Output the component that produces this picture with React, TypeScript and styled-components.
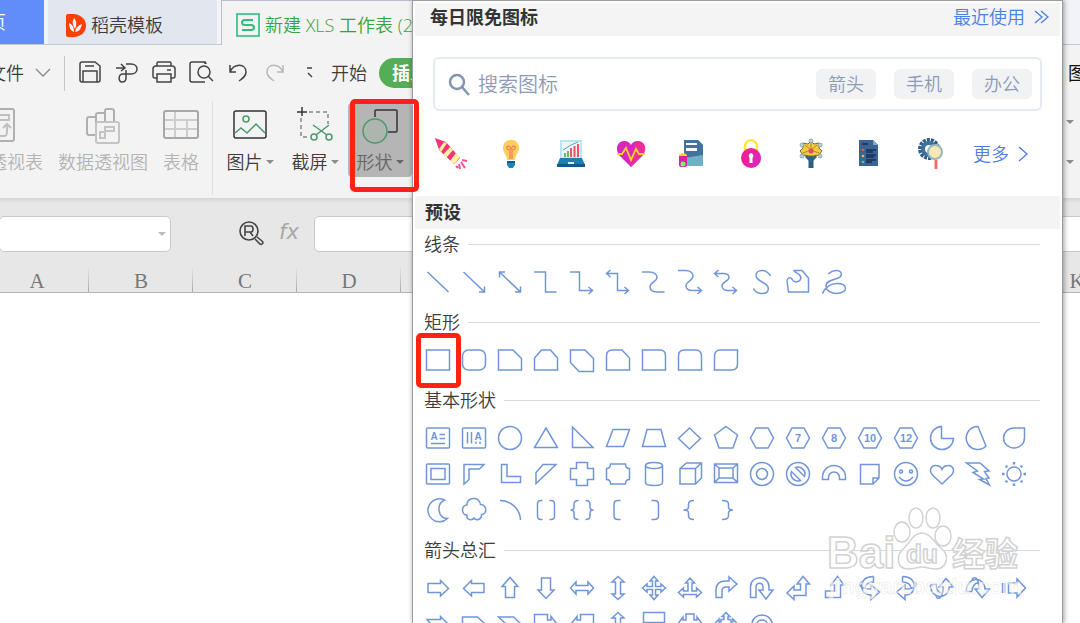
import React from "react";
import styled, { createGlobalStyle, css } from "styled-components";

const GlobalStyle = createGlobalStyle`
  * { box-sizing: border-box; }
  html, body { margin: 0; padding: 0; }
  body {
    font-family: "Open Sans", "Noto Sans CJK SC", sans-serif;
    font-size: 18px;
    line-height: 24px;
    font-weight: 350;
    color: #3c3c3c;
    background: #fff;
  }
  button, input { font: inherit; color: inherit; }
  button { border: 0; padding: 0; background: none; white-space: nowrap; cursor: pointer; }
  svg { display: block; flex: none; overflow: visible; }
`;

const BLUE = "#7096d9";

/* ---------- workbook window ---------- */

const Page = styled.div`
  position: relative;
  min-height: 100vh;
  overflow: hidden;
  display: flex;
  flex-direction: column;
`;

const TabBar = styled.nav`
  display: flex;
  height: 45px;
  background: #f1f3f8;
  box-shadow: inset 0 -1px #c3c8d7;
`;

const HomeTab = styled.button`
  width: 44px;
  height: 44px;
  margin-right: 4px;
  padding-right: 38px;
  display: flex;
  justify-content: flex-end;
  align-items: center;
  overflow: hidden;
  background: #608dfa;
  color: #fff;
`;

const Tab = styled.button<{ $active?: boolean }>`
  display: flex;
  align-items: center;
  height: 44px;
  padding: 6px 0 0 18px;
  gap: 5px;
  width: 169px;
  margin-right: 4px;
  background: #e2e6ef;
  ${(p) =>
    p.$active &&
    css`
      height: 45px;
      width: 320px;
      padding: 4px 0 0 14px;
      background: #f3f3f3;
      border-left: 1px solid #b9bed0;
      border-top: 1px solid #b9bed0;
      color: #36a33c;
    `}
`;

const MenuRow = styled.div`
  display: flex;
  align-items: center;
  height: 56px;
  background: #f3f3f3;
`;

const FileButton = styled.button`
  width: 64px;
  padding-right: 14px;
  display: flex;
  align-items: center;
  justify-content: flex-end;
  gap: 12px;
`;

const Divider = styled.span<{ $height: number; $color: string }>`
  flex: none;
  width: 1px;
  height: ${(p) => p.$height}px;
  background: ${(p) => p.$color};
`;

const QuickTools = styled.div`
  display: flex;
  margin: 0 1px 0 6px;
`;

const QuickButton = styled.button`
  width: 37px;
  height: 32px;
  padding-bottom: 2px;
  display: grid;
  place-items: center;
`;

const RibbonTab = styled.button<{ $active?: boolean }>`
  height: 30px;
  ${(p) =>
    p.$active &&
    css`
      margin-left: 12px;
      padding: 0 13px;
      border-radius: 15px;
      background: #55ae55;
      color: #fff;
      font-weight: 700;
    `}
`;

const EdgeTab = styled.button`
  margin-left: auto;
  width: 12px;
  overflow: hidden;
  text-align: left;
  color: #111;
  font-weight: 400;
`;

const Ribbon = styled.div`
  display: flex;
  height: 97px;
  background: #f3f3f3;
`;

const PivotGroup = styled.div`
  display: flex;
  gap: 14px;
  margin: 2px 12px 0 -48px;
  color: #b4b4b4;
`;

const InsertGroup = styled.div`
  display: flex;
  gap: 1px;
  margin: 2px 0 0 5px;
`;

const Tool = styled.button<{ $width: number; $pressed?: boolean }>`
  flex: none;
  width: ${(p) => p.$width}px;
  height: 74px;
  display: flex;
  flex-direction: column;
  align-items: center;
  justify-content: center;
  gap: 7px;
  border-radius: 4px;
  background: ${(p) => (p.$pressed ? "#b5b5b5" : "transparent")};
  color: ${(p) => (p.$pressed ? "#666" : "inherit")};
`;

const ToolLabel = styled.span`
  display: flex;
  align-items: center;
  justify-content: center;
  gap: 3px;
`;

const Caret = styled.span<{ $color?: string }>`
  border: 4px solid transparent;
  border-bottom: 0;
  border-top-color: ${(p) => p.$color ?? "#8c8c8c"};
`;

const EdgeCarets = styled.div`
  margin-left: auto;
  width: 14px;
  padding-top: 19px;
  display: flex;
  flex-direction: column;
  align-items: flex-start;
  gap: 36px;
`;

const FormulaRow = styled.div`
  display: flex;
  align-items: center;
  height: 68px;
  padding-top: 3px;
  background: linear-gradient(#d4d4d4, #e7e7e7 5px);
`;

const NameBox = styled.label`
  flex: none;
  display: flex;
  align-items: center;
  width: 172px;
  height: 36px;
  margin-left: -1px;
  padding-right: 4px;
  border: 1px solid #c8c8c8;
  border-radius: 5px;
  background: #fff;
`;

const PlainInput = styled.input`
  flex: 1;
  min-width: 0;
  border: 0;
  outline: 0;
  padding: 0;
  background: transparent;
`;

const FormulaTools = styled.div`
  display: flex;
  align-items: center;
  gap: 15px;
  width: 143px;
  padding-left: 68px;
`;

const Fx = styled.button`
  padding-bottom: 4px;
  font-family: "DejaVu Sans", sans-serif;
  font-size: 21px;
  font-style: italic;
  color: #a8a8a8;
`;

const FormulaInput = styled.input`
  flex: 1;
  min-width: 0;
  height: 36px;
  margin-right: -8px;
  border: 1px solid #c8c8c8;
  border-radius: 5px;
  background: #fff;
`;

const Sheet = styled.table`
  width: 1144px;
  margin-left: -15px;
  table-layout: fixed;
  border-collapse: separate;
  border-spacing: 0;
`;

const ColumnHead = styled.th`
  height: 27px;
  padding: 3px 0 0;
  border-bottom: 1px solid #b4b4b4;
  background: linear-gradient(#e7e7e7, #aaa) right / 1px 100% no-repeat #e7e7e7;
  font: 400 21px/22px "Liberation Serif", serif;
  color: #777;
`;

/* ---------- shape gallery ---------- */

const Panel = styled.section`
  position: absolute;
  top: 0;
  bottom: 0;
  left: 412px;
  right: 17px;
  padding: 2px;
  overflow: hidden;
  background: #fff;
  border: 1px solid #9c9ca0;
  border-bottom: 0;
`;

const PanelShadow = styled.div`
  position: absolute;
  top: 0;
  bottom: 0;
  left: 412px;
  right: 17px;
  box-shadow: 1px 0 5px rgba(0, 0, 0, 0.4);
`;

const Bar = styled.header<{ $indent: number }>`
  display: flex;
  align-items: center;
  justify-content: space-between;
  height: 33px;
  padding: 0 11px 6px ${(p) => p.$indent}px;
  background: #f4f4f4;
`;

const PresetBar = styled(Bar)`
  padding-bottom: 1px;
`;

const BarTitle = styled.h2`
  margin: 0;
  font-size: 18px;
  line-height: 24px;
  font-weight: 700;
  color: #333;
`;

const BlueLink = styled.a`
  display: flex;
  align-items: center;
  gap: 9px;
  color: #4a7fe8;
  text-decoration: none;
`;

const SearchBox = styled.div`
  display: flex;
  align-items: center;
  height: 54px;
  margin: 21px 18px 0;
  padding: 0 8px 0 13px;
  border: 2px solid #e5e9f0;
  border-radius: 6px;
  color: #8e9ab4;
`;

const SearchLabel = styled.label`
  flex: 1;
  display: flex;
  align-items: center;
  gap: 8px;
  padding-top: 2px;
`;

const SearchInput = styled(PlainInput)`
  font-size: 20px;
  &::placeholder {
    color: #8e9ab4;
    opacity: 1;
  }
`;

const Pills = styled.div`
  display: flex;
  gap: 18px;
`;

const Pill = styled.button`
  width: 60px;
  height: 30px;
  border-radius: 6px;
  background: #f1f2f4;
`;

const DailyRow = styled.div`
  display: flex;
  align-items: center;
  height: 85px;
  padding-left: 6px;
`;

const DailyButton = styled.button`
  width: 60px;
  height: 40px;
  display: grid;
  place-items: center;
`;

const MoreLink = styled(BlueLink)`
  margin-left: 12px;
`;

const Groups = styled.div`
  padding: 1px 20px 0 5px;
`;

const Group = styled.section`
  padding-bottom: 8px;
`;

const GroupTitle = styled.h3`
  display: flex;
  align-items: center;
  gap: 8px;
  height: 28px;
  margin: 0 0 6px 4px;
  font-size: 18px;
  font-weight: 350;
  &::after {
    content: "";
    flex: 1;
    height: 1px;
    background: #dadada;
  }
`;

const ShapeGrid = styled.div`
  display: grid;
  grid-template-columns: repeat(17, 36px);
`;

const ShapeButton = styled.button`
  position: relative;
  width: 36px;
  height: 36px;
`;

const mark = css`
  position: absolute;
  border: 5px solid #ff2214;
  border-radius: 5px;
  pointer-events: none;
`;

const ButtonMark = styled.div`
  ${mark}
  left: 350px;
  top: 99px;
  width: 69px;
  height: 93px;
`;

const ShapeMark = styled.span`
  ${mark}
  inset: -9px -5px -10px -4px;
`;

const Watermark = styled.svg`
  position: absolute;
  left: 826px;
  top: 499px;
  pointer-events: none;
`;

/* ---------- shape drawings, centred on the origin ---------- */

type Shape = { name: string; d?: string; extra?: React.ReactNode };

const hex = "M-6-10H6L11.5 0L6 10H-6L-11.5 0Z";
const glyph = (text: string, x = 0, y = 4, size = 11) => (
  <text
    x={x}
    y={y}
    textAnchor="middle"
    fontFamily="Liberation Sans, sans-serif"
    fontSize={size}
    fontWeight={700}
    fill={BLUE}
    stroke="none"
  >
    {text}
  </text>
);
const ring = (r: number) => <circle r={r} />;

const lines: Shape[] = [
  { name: "直线", d: "M-10.5-10L10.5 10" },
  { name: "箭头", d: "M-10.5-10L10.5 10M10.5 4.5V10H5" },
  { name: "双箭头", d: "M-10.5-10L10.5 10M10.5 4.5V10H5M-10.5-4.5V-10H-5" },
  { name: "肘形连接符", d: "M-12-10H-.5V10H10.5" },
  { name: "肘形箭头", d: "M-12-10H-2.5V8.5H10.5M6.5 5L10.5 8.5L6.5 12" },
  { name: "肘形双箭头", d: "M-11-8.5H-.5V8.5H10.5M6.5 5L10.5 8.5L6.5 12M-7.5-12L-11.5-8.5L-7.5-5" },
  { name: "曲线连接符", d: "M-12-10H-5C1-10 3-7 3-4.5C3 0-4 0-4 5C-4 8-1 10 4 10H10.5" },
  { name: "曲线箭头", d: "M-12-11.5H-5C1-11.5 3-8.5 3-6C3-1-4-1-4 4C-4 7-1 8.5 3 8.5H11.5M7.5 5L11.5 8.5L7.5 12" },
  { name: "曲线双箭头", d: "M-11-8.5H-3C1-8.5 3-7 3-4.5C3-.5-4-.5-4 4C-4 7-1 8.5 2 8.5H10.5M6.5 5L10.5 8.5L6.5 12M-7.5-12L-11.5-8.5L-7.5-5" },
  { name: "曲线", d: "M8.7-6.3C6-10 3-11.6 0-11.6C-4-11.6-6-9-6-6.5C-6 0 6.3 0 6.3 6.5C6.3 9.5 4 11.6 0 11.6C-4 11.6-7 9.5-8.7 6.7" },
  { name: "任意多边形", d: "M-4-11.5H4L10.5-4V10H-9.5L-11-1C-11-4-8.5-5-6.5-3.5C-5-2-5 0-2 0C2 0 4-3.5 2-6.5C.5-9-3-9-4-11.5Z" },
  { name: "自由曲线", d: "M-5.7-8C-3-11 0-11.6 3-11.6C7-11.6 8.5-8 6.5-5.5C4-2-8-3-8 4C-8 8-4 11.4 2 11.4C8 11.4 11.5 9 11.5 6.5C11.5 4 9 1.5 3 1.5C-4 1.5-9 6-11.6 11.6" },
];

const rects: Shape[] = [
  { name: "矩形", d: "M-11.5-10H11.5V10H-11.5Z" },
  { name: "圆角矩形", extra: <rect x={-11.5} y={-10} width={23} height={20} rx={6} /> },
  { name: "剪去单角", d: "M-11.5-10H3L11.5-1.5V10H-11.5Z" },
  { name: "剪去同侧角", d: "M-11.5-2L-4.5-10H4.5L11.5-2V10H-11.5Z" },
  { name: "剪去对角", d: "M-11.5-10H3L11.5-1.5V11.5H-3L-11.5 2.5Z" },
  { name: "剪去圆角", d: "M-11.5 10V-4Q-11.5-10-5.5-10H4L11.5-2V10Z" },
  { name: "单圆角", d: "M-11.5-10H6Q11.5-10 11.5-4V10H-11.5Z" },
  { name: "同侧圆角", d: "M-11.5 10V-4Q-11.5-10-5.5-10H5.5Q11.5-10 11.5-4V10Z" },
  { name: "对角圆角", d: "M11.5-10V4Q11.5 10 5.5 10H-11.5V-4Q-11.5-10-5.5-10Z" },
];

const basics: Shape[] = [
  { name: "文本框", d: "M1.5-3.5H7M1.5 .5H7M-7 5.5H7", extra: <><rect x={-11.5} y={-10} width={23} height={20} rx={1} />{glyph("A", -4, 2, 10)}</> },
  { name: "竖向文本框", d: "M-6.5-6V5.5M-2.5-6V5.5M2 3.5V6M6 3.5V6", extra: <><rect x={-11.5} y={-10} width={23} height={20} rx={1} />{glyph("A", 4, 2, 10)}</> },
  { name: "椭圆", extra: ring(11.5) },
  { name: "等腰三角形", d: "M0-10L11.5 9.5H-11.5Z" },
  { name: "直角三角形", d: "M-9.5-11L11 9.5H-9.5Z" },
  { name: "平行四边形", d: "M-5-8.5H11.5L5.5 8.5H-11.5Z" },
  { name: "梯形", d: "M-7-8.5H7L11.5 8.5H-11.5Z" },
  { name: "菱形", d: "M-.5-10L10.5 .5L-.5 11L-11.5 .5Z" },
  { name: "五边形", d: "M0-11.5L11.5-3L7 10H-7L-11.5-3Z" },
  { name: "六边形", d: hex },
  { name: "七边形", d: hex, extra: glyph("7") },
  { name: "八边形", d: hex, extra: glyph("8") },
  { name: "十边形", d: hex, extra: glyph("10") },
  { name: "十二边形", d: hex, extra: glyph("12") },
  { name: "饼形", d: "M-.5-11.5A11.5 11.5 0 1 0 11.5 .5H-.5Z" },
  { name: "弦形", d: "M0-11.5L8 8A11.5 11.5 0 1 1 0-11.5Z" },
  { name: "泪滴形", d: "M10.5-10V0A10.5 10 0 1 1 0-10Z" },
  { name: "图文框", extra: <><rect x={-11.5} y={-10} width={23} height={20} rx={1} /><rect x={-7} y={-5.5} width={14} height={11} /></> },
  { name: "半闭框", d: "M-10-9.5H10L5.5-5H-5V5.5L-10 10Z" },
  { name: "L形", d: "M-8.5-9.5H-3V2.5H10.5V8.5H-8.5Z" },
  { name: "斜纹", d: "M-10-1.5L-3-9.5H10L-10 9.5Z" },
  { name: "十字形", d: "M-5.5-11.5H5.5V-5.5H11.5V5.5H5.5V11.5H-5.5V5.5H-11.5V-5.5H-5.5Z" },
  { name: "缺角矩形", d: "M-7.5-10H7.5Q7.5-5.5 11.5-5.5V5.5Q7.5 5.5 7.5 10H-7.5Q-7.5 5.5-11.5 5.5V-5.5Q-7.5-5.5-7.5-10Z" },
  { name: "圆柱形", d: "M-8.5-8.5V8.5C-8.5 12.5 8.5 12.5 8.5 8.5V-8.5", extra: <ellipse cy={-8.5} rx={8.5} ry={3} /> },
  { name: "立方体", d: "M-10-5.5H5.5V10H-10ZM-10-5.5L-3.5-11H11.5V4L5.5 10M5.5-5.5L11.5-11" },
  { name: "棱台", d: "M-11.5-10H11.5V8.5H-11.5ZM-7-6H7V4H-7ZM-11.5-10L-7-6M11.5-10L7-6M-11.5 8.5L-7 4M11.5 8.5L7 4" },
  { name: "同心圆", extra: <>{ring(11.5)}{ring(5.5)}</> },
  { name: "禁止符", d: "M-2.5-6.5A7 7 0 0 1 6.5 2.5ZM2.5 6.5A7 7 0 0 1-6.5-2.5Z", extra: ring(11.5) },
  { name: "空心弧", d: "M-11.5 5.5V3A11.5 11.5 0 0 1 11.5 3V5.5H5.5V3.5A5.5 5.5 0 0 0-5.5 3.5V5.5Z" },
  { name: "折角形", d: "M-9.5-9.5H9V4L3 10H-9.5ZM3 10V4H9" },
  { name: "笑脸", d: "M-7 3Q0 11 7 3", extra: <>{ring(11.5)}<circle cx={-5} cy={-2.5} r={1.5} /><circle cx={5} cy={-2.5} r={1.5} /></> },
  { name: "心形", d: "M0 10L-9.5 1C-14-4-10-9-6-8.5C-3-8.5-1-7 0-4.5C1-7 3-8.5 6-8.5C10-9 14-4 9.5 1Z" },
  { name: "闪电形", d: "M-11.5-11H2L11-3L6.5-2.5L11 4L8 4.5L11.5 11L1.5 5.5L5.5 5L-5-1.5L-.5-3Z" },
  { name: "太阳形", extra: <>{ring(7)}<path d="M0-12V-9.5M0 9.5V12M-12 0H-9.5M9.5 0H12M-8.5-8L-6.5-7M8.5-8L6.5-7M-8.5 8L-6.5 7M8.5 8L6.5 7" strokeWidth={2.4} /></> },
  { name: "新月形", d: "M6.5-10A11.5 11.5 0 1 0 9.5 8.5C-.5 8-2-6 6.5-10Z" },
  { name: "云形", d: "M-7-5C-8-13 6-14 6.5-5.5C13-6 13.5 5 7.5 4.5C8 10 2 11 0 8C-2 11-8 10-7 5C-13 5-13-5-7-5Z" },
  { name: "弧形", d: "M-10-9.5C1-9.5 10-1 10.5 10" },
  { name: "双括号", d: "M-3.5-9.5H-5Q-8.5-9.5-8.5-6V6Q-8.5 9.5-5 9.5H-3.5M3.5-9.5H5Q8.5-9.5 8.5-6V6Q8.5 9.5 5 9.5H3.5" },
  { name: "双大括号", d: "M-3.5-9.5Q-8-9.5-8-6V-3Q-8 0-11.5 0Q-8 0-8 3V6Q-8 9.5-3.5 9.5M3.5-9.5Q8-9.5 8-6V-3Q8 0 11.5 0Q8 0 8 3V6Q8 9.5 3.5 9.5" },
  { name: "左中括号", d: "M2.5-9.5H0Q-4-9.5-4-6V6Q-4 9.5 0 9.5H2.5" },
  { name: "右中括号", d: "M-2.5-9.5H0Q4.5-9.5 4.5-6V6Q4.5 9.5 0 9.5H-2.5" },
  { name: "左大括号", d: "M4-9.5Q-1.5-9.5-1.5-6V-3Q-1.5 0-6.5 0Q-1.5 0-1.5 3V6Q-1.5 9.5 4 9.5" },
  { name: "右大括号", d: "M-4-9.5Q2.5-9.5 2.5-6V-3Q2.5 0 7 0Q2.5 0 2.5 3V6Q2.5 9.5-4 9.5" },
];

const updown = "M0-11.5L6-6H2.5V6H6L0 11.5L-6 6H-2.5V-6H-6Z";

const arrows: Shape[] = [
  { name: "右箭头", d: "M-10-4.5H2.5V-7.5L10.5 .5L2.5 8V4.5H-10Z" },
  { name: "左箭头", d: "M10-4.5H-2.5V-7.5L-10.5 .5L-2.5 8V4.5H10Z" },
  { name: "上箭头", d: "M-4.5 9.5V-1.5H-8L0-10.5L8-1.5H4.5V9.5Z" },
  { name: "下箭头", d: "M-4.5-10V2H-8L0 10.5L8 2H4.5V-10Z" },
  { name: "左右箭头", d: "M-11.5 0L-6-6V-2.5H6V-6L11.5 0L6 6V2.5H-6V6Z" },
  { name: "上下箭头", d: updown },
  { name: "十字箭头", d: "M0-11.5L4-7H1.5V-1.5H7V-4L11.5 0L7 4V1.5H1.5V7H4L0 11.5L-4 7H-1.5V1.5H-7V4L-11.5 0L-7-4V-1.5H-1.5V-7H-4Z" },
  { name: "丁字箭头", d: "M0-10L4.5-5H2V3H6.5V0L11.5 4.5L6.5 9V6.5H-6.5V9L-11.5 4.5L-6.5 0V3H-2V-5H-4.5Z" },
  { name: "圆角右箭头", d: "M-10 9.5V2Q-10-7 0-7H3V-11L11-4L3 3V-1H0Q-4-1-4 3V9.5Z" },
  { name: "手杖形箭头", d: "M-11.5 9.5V-1C-11.5-13.5 7-13.5 7-1V2H11L4 11L-3 2H1V-1C1-6-6-6-6-1V9.5Z" },
  { name: "直角双向箭头", d: "M5-11.5L11.5-4H8V7.5H-4V11.5L-11 5L-4-2V2H2.5V-4H-1Z" },
  { name: "直角上箭头", d: "M3.5-11.5L10-3H6.5V9.5H-8.5V3H.5V-3H-3Z" },
  { name: "左弧形箭头", d: "M3.5-11.5C-12-12-12 7 1 7V11.5L9.5 4L1-3V1C-12 1-12 -5-8 -6M3.5-11.5V-6C-2-6-5-3-5 0" },
  { name: "右弧形箭头", d: "M-3.5-11.5C12-12 12 7-1 7V11.5L-9.5 4L-1-3V1C12 1 12-5 8-6M-3.5-11.5V-6C2-6 5-3 5 0" },
  { name: "下弧形箭头", d: "M-11.5-3.5C-12 12 7 12 7-1H11.5L4-9.5L-3-1H1C1 12-5 12-6 8M-11.5-3.5H-6C-6 2-3 5 0 5" },
  { name: "上弧形箭头", d: "M-11.5 3.5C-12-12 7-12 7 1H11.5L4 9.5L-3 1H1C1-12-5-12-6-8M-11.5 3.5H-6C-6-2-3-5 0-5" },
  { name: "虚尾箭头", d: "M-11.5-5V5M-9-5V5M-5.5-5H3V-9L11.5 0L3 9V5H-5.5Z" },
  { name: "燕尾形箭头", d: "M-11-4.5H2.5V-7.5L10.5 .5L2.5 8V4.5H-11L-7 0Z" },
  { name: "五边形箭头", d: "M-11.5-7H3.5L11 0L3.5 7H-11.5Z" },
  { name: "燕尾形", d: "M-11.5-7H3.5L11 0L3.5 7H-11.5L-4 0Z" },
  { name: "右箭头标注", d: "M-11.5-9.5H1.5V-4H5V-7.5L11 0L5 6V3H1.5V9.5H-11.5Z" },
  { name: "左箭头标注", d: "M11.5-9.5H-1.5V-4H-5V-7.5L-11 0L-5 6V3H-1.5V9.5H11.5Z" },
  { name: "上下箭头标注", d: updown },
  { name: "下箭头标注", d: "M-10.5-11.5H10.5V-1.5H-10.5ZM-3-1.5V4H-6L0 10L6 4H3V-1.5" },
  { name: "左右箭头标注", d: "M-4-10H4V-4H7V-7L11.5-1L7 5V2H-7V5L-11.5-1L-7-7V-4H-4Z" },
  { name: "十字箭头标注", d: "M0-11.5L4-7.5H2V-4.5H5V-2H7V-5L11.5 0L7 5V2H-7V5L-11.5 0L-7-5V-2H-5V-4.5H-2V-7.5H-4Z" },
  { name: "环形箭头", d: "M-10 0A10 9 0 0 1 10 0H5A5 4 0 0 0-5 0Z" },
];

const galleries: { title: string; shapes: Shape[]; marked?: number }[] = [
  { title: "线条", shapes: lines },
  { title: "矩形", shapes: rects, marked: 0 },
  { title: "基本形状", shapes: basics },
  { title: "箭头总汇", shapes: arrows },
];

const ShapeIcon = ({ shape }: { shape: Shape }) => (
  <svg width="36" height="36" viewBox="-18 -18 36 36" fill="none" stroke={BLUE} strokeWidth="1.5">
    {shape.extra}
    {shape.d && <path d={shape.d} />}
  </svg>
);

/* ---------- coloured daily icons ---------- */

const daily: { name: string; art: React.ReactNode }[] = [
  { name: "火箭", art: <>
    <path d="M1 1L12 5L26 21L20 27L5 13Z" fill="#f5347f" />
    <path d="M10 5L13 6L7 15L5 12ZM16 10L19 13L12 21L9 18ZM22 16L26 20L20 27L16 24Z" fill="#fff3a0" />
    <path d="M25 27L26 32M27 25L31 31M28 23L33 24M22 29L24 31" stroke="#f5508f" strokeWidth="2" fill="none" />
  </> },
  { name: "灯泡", art: <>
    <path d="M9 11C9 0 25 0 25 11C25 16 21 18 21 23H13C13 18 9 16 9 11Z" fill="#ffcf5e" />
    <path d="M16 22V13C12 13 12 9 14.500 9C16 9 16 11 17 12C18 11 18 9 19.500 9C22 9 22 13 18 13V22" stroke="#f5825b" strokeWidth="1.300" fill="none" />
    <path d="M13 24H21V28L19 31H15L13 28Z" fill="#1b87b8" /><path d="M13 25H21" stroke="#125d86" strokeWidth="2" />
  </> },
  { name: "笔记本电脑", art: <>
    <path d="M6 3H28V22H6Z" fill="#b9e6ee" /><path d="M8 5H26V20H8Z" fill="#edf6ee" />
    <path d="M10 20V16H12V20ZM13 20V14H15V20Z" fill="#69b66b" /><path d="M16 20V11H18V20ZM19.500 20V9H21.500V20ZM23 20V7H25V20Z" fill="#f0506b" />
    <path d="M9 13L17 8L24 5" stroke="#4ca6cf" fill="none" /><path d="M6 21H28L31 28H3Z" fill="#1d7fb0" /><path d="M3 27H31V30H3Z" fill="#0d5c8d" /><path d="M14 25H20V27H14Z" fill="#d3eef5" />
  </> },
  { name: "心电图", art: <>
    <path d="M17 30L5 18C0 10 5 4 10 4C14 4 16 6 17 8C18 6 20 4 24 4C29 4 34 10 29 18Z" fill="#d926bd" />
    <path d="M22 4C31 4 34 11 29 18L17 30V22Z" fill="#f5308c" opacity=".7" />
    <path d="M3 17H8L12 11L17 23L22 12L25 17H31" stroke="#ffd426" strokeWidth="1.800" fill="none" />
  </> },
  { name: "文件夹", art: <>
    <path d="M10 3H24L29 8V29H10Z" fill="#6fb0c4" /><path d="M10 3H24L29 8V18L10 21Z" fill="#44729f" />
    <path d="M12 6H23V8H12ZM12 11H23V14H12Z" fill="#f2f8fb" />
    <rect x="5" y="17" width="8" height="13" rx="2" fill="#e61aa6" /><path d="M5 18Q9 14 13 18V19H5Z" fill="#ffd23a" /><circle cx="9" cy="27" r="2.500" fill="#7af07c" />
  </> },
  { name: "密码锁", art: <>
    <path d="M11 14V10C11 1 23 1 23 10V14" stroke="#fce839" strokeWidth="2.500" fill="none" />
    <circle cx="17" cy="21" r="10" fill="#ee1f9c" /><path d="M24 14A10 10 0 0 1 17 31V20Z" fill="#c32fd2" opacity=".5" />
    <path d="M17 16A3 3 0 0 1 18.500 21V26H15.500V21A3 3 0 0 1 17 16Z" fill="#fff" />
  </> },
  { name: "机器花", art: <>
    <path d="M17 14V31" stroke="#2f5d7f" strokeWidth="5" /><path d="M12 19L17 24L22 19" stroke="#31638a" strokeWidth="3" fill="none" />
    <path d="M17 4L20 7L25 6L25 11L28 14L25 18L19 19H15L9 18L6 14L9 11L9 6L14 7Z" fill="#f3c940" stroke="#7c6531" />
    <path d="M17 6V13L11 8M17 13L23 8M17 13L9 16M17 13L25 16" stroke="#9c7b2c" strokeWidth=".8" fill="none" />
    <circle cx="17" cy="14" r="2.500" fill="#df4a68" />
    <g fill="#b4d5df" stroke="#6f8791" strokeWidth=".6"><circle cx="17" cy="4" r="2" /><circle cx="8" cy="8" r="2" /><circle cx="26" cy="8" r="2" /><circle cx="8" cy="19" r="2" /><circle cx="26" cy="19" r="2" /></g>
  </> },
  { name: "清单", art: <>
    <path d="M5 3H19L24 8V29H5Z" fill="#386596" /><path d="M19 3L24 8H19Z" fill="#7fa8c9" />
    <path d="M8 7H14M12 13H22M12 18H22M12 23H22M12 15H19M12 20H20M12 25H18" stroke="#182f4c" strokeWidth="1.300" />
    <circle cx="9" cy="13" r="1.300" fill="#e5564d" /><circle cx="9" cy="19" r="1.300" fill="#e2bc4c" /><circle cx="9" cy="25" r="1.300" fill="#71b9a5" />
  </> },
  { name: "搜索设置", art: <>
    <circle cx="15" cy="12" r="9" fill="none" stroke="#315d87" strokeWidth="4" strokeDasharray="3 1" /><circle cx="15" cy="12" r="8" fill="#3f719b" /><circle cx="15" cy="12" r="4" fill="#fff" />
    <circle cx="21" cy="15" r="7" fill="#fce7b5" stroke="#93b8bd" strokeWidth="2" /><path d="M22 23V32" stroke="#ec7069" strokeWidth="3" />
  </> },
];

/* ---------- toolbar icons ---------- */

const quick: { name: string; art: React.ReactNode; muted?: boolean }[] = [
  { name: "保存", art: <><path d="M4 2H17L22 6V20Q22 22 20 22H4Q2 22 2 20V4Q2 2 4 2Z" /><path d="M5 22V11H19V22M7 6H16" /></> },
  { name: "输出", art: <><path d="M1 8H9M6 4L10 8L6 11M11 4H16C24 4 24 14 16 14H8C3 14 3 22 7 22C10 22 11 20 11 18V10" /></> },
  { name: "打印", art: <><path d="M5 6V3Q5 2 6 2H18Q19 2 19 3V6M5 18H3Q1 18 1 16V9Q1 6 4 6H20Q23 6 23 9V16Q23 18 21 18H19M5 14H19V22H5ZM15 10H19" /></> },
  { name: "打印预览", art: <><path d="M16 4V2H3Q1 2 1 4V20Q1 22 3 22H16M11 2H14Q17 2 17 4" /><circle cx="15" cy="12" r="6" /><path d="M19 16L24 21" /></> },
  { name: "撤销", art: <path d="M4 5V12H10M4 12C8 3 20 3 20 12C20 16 17 18 13 21" /> },
  { name: "恢复", muted: true, art: <path d="M20 5V12H14M20 12C16 3 4 3 4 12C4 16 7 18 11 21" /> },
  { name: "更多", art: <path d="M7 8H12M8 13L12 17" /> },
];

const PivotTableIcon = () => (
  <svg width="36" height="36" viewBox="0 0 36 36" fill="none" stroke="#b0b0b0" strokeWidth="2">
    <rect x="2" y="2" width="32" height="32" rx="2" />
    <path d="M7 8H29V13H7ZM7 18H13V29H7ZM18 29H24Q27 29 27 25V18M23 21L27 17L31 21" stroke="#c0c0c0" />
  </svg>
);
const PivotChartIcon = () => (
  <svg width="36" height="36" viewBox="0 0 36 36" fill="none" stroke="#b0b0b0" strokeWidth="2">
    <path d="M11 28H4Q2 28 2 26V12Q2 10 4 10H11V28M11 14V8Q11 6 13 6H20V15M20 15V4Q20 2 22 2H26Q29 2 29 4V14" />
    <rect x="11" y="15" width="23" height="21" rx="2" stroke="#c4c4c4" />
    <path d="M20 20H29V24H20ZM15 25H20V31H15Z" stroke="#c4c4c4" />
  </svg>
);
const TableIcon = () => (
  <svg width="36" height="36" viewBox="0 0 36 36" fill="none" stroke="#a8a8a8" strokeWidth="2">
    <path d="M1 13H35M1 22H35M12 4V31M24 13V31" stroke="#cdcdcd" />
    <rect x="1" y="4" width="34" height="27" rx="2" />
  </svg>
);
const PictureIcon = () => (
  <svg width="36" height="36" viewBox="0 0 36 36" fill="none" stroke="#333" strokeWidth="1.500">
    <rect x="2" y="4" width="32" height="27" rx="2" />
    <g stroke="#4c9a6b"><circle cx="14" cy="12" r="3" /><path d="M3 26L9 21L15 26L24 17L33 26" /></g>
  </svg>
);
const ScreenshotIcon = () => (
  <svg width="36" height="36" viewBox="0 0 36 36" fill="none" stroke="#333" strokeWidth="1.500">
    <path d="M0 5H10M5 0V9" />
    <path d="M12 5H31V17M4 11V30H12" stroke="#888" strokeDasharray="4 3" />
    <g stroke="#4c9a6b"><path d="M16 18L30 28M32 18L19 28" /><circle cx="17" cy="30" r="3" /><circle cx="32" cy="30" r="3" /></g>
  </svg>
);
const ShapesIcon = () => (
  <svg width="36" height="36" viewBox="0 0 36 36" fill="none" strokeWidth="1.500">
    <path d="M13 10V4Q13 3 14 3H34Q35 3 35 4V24Q35 25 34 25H26" stroke="#333" />
    <circle cx="13" cy="24" r="12" stroke="#4c9a6b" fill="#aeb4ae" />
  </svg>
);

export default function App() {
  return (
    <Page>
      <GlobalStyle />
      <TabBar>
        <HomeTab>首页</HomeTab>
        <Tab>
          <svg width="20" height="23" viewBox="0 0 20 23">
            <path d="M2 0H8C16 1 20 6 20 12C20 18 15 22 9 23H2Q0 23 0 21V2Q0 0 2 0Z" fill="#fb3f06" />
            <path d="M8 4Q12 8 9 15Q5 9 8 4ZM3 9Q8 11 8 18Q3 16 3 9ZM16 10Q15 17 9 18Q10 12 16 10Z" fill="#fff" />
          </svg>
          稻壳模板
        </Tab>
        <Tab $active>
          <svg width="24" height="24" viewBox="0 0 24 24" fill="none" stroke="#2fbd7d">
            <rect x="1" y="1" width="22" height="22" strokeWidth="1.600" />
            <path d="M17 7H9Q6 7 6 9.500Q6 12 9 12H15Q18 12 18 14.500Q18 17 15 17H6" strokeWidth="2" />
          </svg>
          新建 XLS 工作表 (2).xls
        </Tab>
      </TabBar>

      <MenuRow>
        <FileButton>
          文件
          <svg width="14" height="8" viewBox="0 0 14 8" fill="none" stroke="#888" strokeWidth="1.300">
            <path d="M0 0L7 7L14 0" />
          </svg>
        </FileButton>
        <Divider $height={35} $color="#c6c6c6" />
        <QuickTools>
          {quick.map((q) => (
            <QuickButton key={q.name} aria-label={q.name}>
              <svg width="24" height="24" viewBox="0 0 24 24" fill="none" stroke={q.muted ? "#b8b8b8" : "#444"} strokeWidth="1.500">
                {q.art}
              </svg>
            </QuickButton>
          ))}
        </QuickTools>
        <RibbonTab>开始</RibbonTab>
        <RibbonTab $active>插入</RibbonTab>
        <EdgeTab>图</EdgeTab>
      </MenuRow>

      <Ribbon>
        <PivotGroup>
          <Tool $width={92}><PivotTableIcon /><ToolLabel>数据透视表</ToolLabel></Tool>
          <Tool $width={90}><PivotChartIcon /><ToolLabel>数据透视图</ToolLabel></Tool>
          <Tool $width={38}><TableIcon /><ToolLabel>表格</ToolLabel></Tool>
        </PivotGroup>
        <Divider $height={94} $color="#e0e0e0" />
        <InsertGroup>
          <Tool $width={64}><PictureIcon /><ToolLabel>图片<Caret /></ToolLabel></Tool>
          <Tool $width={64}><ScreenshotIcon /><ToolLabel>截屏<Caret /></ToolLabel></Tool>
          <Tool $width={64} $pressed><ShapesIcon /><ToolLabel>形状<Caret $color="#666" /></ToolLabel></Tool>
        </InsertGroup>
        <EdgeCarets><Caret /><Caret /></EdgeCarets>
      </Ribbon>

      <FormulaRow>
        <NameBox>
          <PlainInput aria-label="名称框" />
          <Caret $color="#bcbcbc" />
        </NameBox>
        <FormulaTools>
          <svg width="25" height="25" viewBox="0 0 25 25" fill="none" stroke="#444" strokeWidth="1.600">
            <circle cx="10" cy="10" r="9" />
            <path d="M6 15V5H12Q14 5 14 8Q14 11 12 11H6M11 11L14 15M16 18L21 23Q23 24 24 22Q24 21 23 20L18 16" />
          </svg>
          <Fx aria-label="插入函数">fx</Fx>
        </FormulaTools>
        <FormulaInput aria-label="编辑栏" />
      </FormulaRow>

      <Sheet>
        <thead>
          <tr>
            {"ABCDEFGHIJK".split("").map((c) => (
              <ColumnHead key={c} scope="col">{c}</ColumnHead>
            ))}
          </tr>
        </thead>
      </Sheet>

      <PanelShadow />
      <Panel aria-label="形状">
        <Bar $indent={15}>
          <BarTitle>每日限免图标</BarTitle>
          <BlueLink href="#recent">
            最近使用
            <svg width="15" height="14" viewBox="0 0 15 14" fill="none" stroke="currentColor" strokeWidth="1.300">
              <path d="M1 1L8 7L1 13M7 1L14 7L7 13" />
            </svg>
          </BlueLink>
        </Bar>
        <SearchBox>
          <SearchLabel>
            <svg width="22" height="22" viewBox="0 0 22 22" fill="none" stroke="#8493b0" strokeWidth="2.500">
              <circle cx="9" cy="8" r="7" />
              <path d="M14 13L21 21" />
            </svg>
            <SearchInput type="search" placeholder="搜索图标" aria-label="搜索图标" />
          </SearchLabel>
          <Pills>
            <Pill>箭头</Pill>
            <Pill>手机</Pill>
            <Pill>办公</Pill>
          </Pills>
        </SearchBox>
        <DailyRow>
          {daily.map((d) => (
            <DailyButton key={d.name} aria-label={d.name}>
              <svg width="34" height="34" viewBox="0 0 34 34">{d.art}</svg>
            </DailyButton>
          ))}
          <MoreLink href="#more">
            更多
            <svg width="10" height="16" viewBox="0 0 10 16" fill="none" stroke="currentColor" strokeWidth="1.300">
              <path d="M1 1L9 8L1 15" />
            </svg>
          </MoreLink>
        </DailyRow>
        <PresetBar $indent={10}>
          <BarTitle>预设</BarTitle>
        </PresetBar>
        <Groups>
          {galleries.map((g) => (
            <Group key={g.title}>
              <GroupTitle>{g.title}</GroupTitle>
              <ShapeGrid>
                {g.shapes.map((s, i) => (
                  <ShapeButton key={s.name} aria-label={s.name}>
                    <ShapeIcon shape={s} />
                    {g.marked === i && <ShapeMark />}
                  </ShapeButton>
                ))}
              </ShapeGrid>
            </Group>
          ))}
        </Groups>
      </Panel>

      <ButtonMark />
      <Watermark width="200" height="104" viewBox="0 0 200 104" fill="#fff" fillOpacity=".7" stroke="#d2d2d2" strokeWidth="1.500">
        <ellipse cx="90" cy="19" rx="7" ry="10" />
        <ellipse cx="107" cy="19" rx="7" ry="10" />
        <ellipse cx="76" cy="33" rx="8" ry="10" />
        <ellipse cx="117" cy="37" rx="8" ry="10" />
        <path d="M96 34C105 34 108 44 115 49C125 57 120 70 110 70C104 70 101 68 96 68C91 68 88 70 82 70C71 70 69 57 78 49C84 44 87 34 96 34Z" />
        <g fontFamily="Liberation Sans, Noto Sans CJK SC, sans-serif" fontWeight="700">
          <text x="1" y="69" fontSize="44">Bai</text>
          <text x="80" y="64" fontSize="26">du</text>
          <text x="126" y="67" fontSize="33">经验</text>
          <text x="3" y="95" fontSize="22" fillOpacity=".6" strokeWidth=".6" strokeOpacity=".5">jingyan.baidu.com</text>
        </g>
      </Watermark>
    </Page>
  );
}
